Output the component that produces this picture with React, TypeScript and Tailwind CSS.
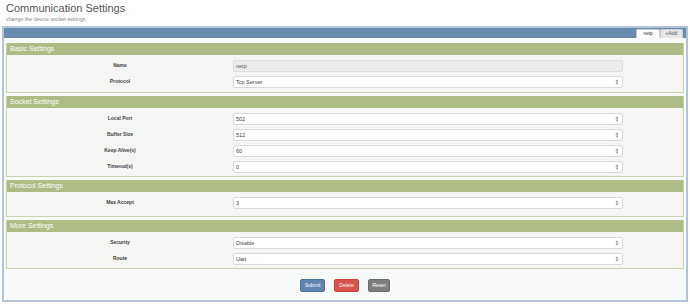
import React from "react";

const Arrow = () => (
  <svg width="4" height="6" viewBox="0 0 4 6" className="shrink-0">
    <path d="M0.5 2.4 L2 0.6 L3.5 2.4 Z" fill="#8a8a8a" />
    <path d="M0.5 3.6 L2 5.4 L3.5 3.6 Z" fill="#8a8a8a" />
  </svg>
);

type Row = { label: string; value: string; disabled?: boolean };

const Field = ({ row }: { row: Row }) => (
  <div className="flex h-[16px] items-center">
    <div className="w-[226px] text-center text-[5px] font-semibold text-[#444]">{row.label}</div>
    {row.disabled ? (
      <div className="flex h-[12px] w-[390px] items-center rounded-[2px] border border-[#dcdcdc] bg-[#ececec] pl-[2px] text-[5.5px] text-[#555]">
        {row.value}
      </div>
    ) : (
      <div className="flex h-[12px] w-[390px] items-center justify-between rounded-[2px] border border-[#dadada] bg-white pl-[2px] pr-[3px] text-[5.5px] text-[#444]">
        <span>{row.value}</span>
        <Arrow />
      </div>
    )}
  </div>
);

const Section = ({ title, rows, pb }: { title: string; rows: Row[]; pb: string }) => (
  <div className="border border-t-0 border-[#c9d2ad] bg-[#f5f6f4]">
    <div className="flex h-[12px] items-center bg-[#adbc84] pl-[3px] text-[7px] text-white">{title}</div>
    <div className={"pt-[3px] " + pb}>
      {rows.map((r) => (
        <Field key={r.label} row={r} />
      ))}
    </div>
  </div>
);

export default function App() {
  return (
    <div className="h-[307px] w-[690px] overflow-hidden bg-white" style={{ fontFamily: '"Liberation Sans", Arial, sans-serif' }}>
      <div className="px-[6px] pt-[1px]">
        <div className="text-[11px] leading-[14px] text-[#555]">Communication Settings</div>
        <div className="mt-[1px] text-[5.3px] leading-[7px] text-[#888]">change the device socket settings</div>
      </div>
      <div className="mx-[2px] mt-[3px] border-2 border-[#b3c4d7] bg-[#f8f9f9]">
        <div className="flex h-[10px] items-end justify-end bg-[#6a8bb0] pr-[3px]">
          <div className="flex h-[9px] w-[24px] items-center justify-center rounded-t-[2px] border border-b-0 border-[#cfcfcf] bg-white text-[5px] text-[#333]">
            netp
          </div>
          <div className="flex h-[9px] w-[23px] items-center justify-center rounded-t-[2px] border border-b-0 border-[#cfcfcf] bg-[#e6e6e6] text-[5px] text-[#555]">
            +Add
          </div>
        </div>
        <div className="flex flex-col gap-[3px] pl-[2px] pr-[2px] pt-[5px]">
          <Section
            title="Basic Settings"
            pb="pb-[2px]"
            rows={[
              { label: "Name", value: "netp", disabled: true },
              { label: "Protocol", value: "Tcp Server" },
            ]}
          />
          <Section
            title="Socket Settings"
            pb="pb-[1px]"
            rows={[
              { label: "Local Port", value: "502" },
              { label: "Buffer Size", value: "512" },
              { label: "Keep Alive(s)", value: "60" },
              { label: "Timeout(s)", value: "0" },
            ]}
          />
          <Section title="Protocol Settings" pb="pb-[5px]" rows={[{ label: "Max Accept", value: "3" }]} />
          <Section
            title="More Settings"
            pb="pb-[1px]"
            rows={[
              { label: "Security", value: "Disable" },
              { label: "Route", value: "Uart" },
            ]}
          />
        </div>
        <div className="flex justify-center gap-[9px] pb-[8px] pt-[10px]">
          <div className="flex h-[13px] w-[25px] items-center justify-center rounded-[2px] border border-[#4f729c] bg-[#6184b0] text-[5px] text-white">
            Submit
          </div>
          <div className="flex h-[13px] w-[25px] items-center justify-center rounded-[2px] border border-[#c4433f] bg-[#d9534f] text-[5px] text-white">
            Delete
          </div>
          <div className="flex h-[13px] w-[22px] items-center justify-center rounded-[2px] border border-[#6a6a6a] bg-[#7e7e7e] text-[5px] text-white">
            Reset
          </div>
        </div>
      </div>
    </div>
  );
}
